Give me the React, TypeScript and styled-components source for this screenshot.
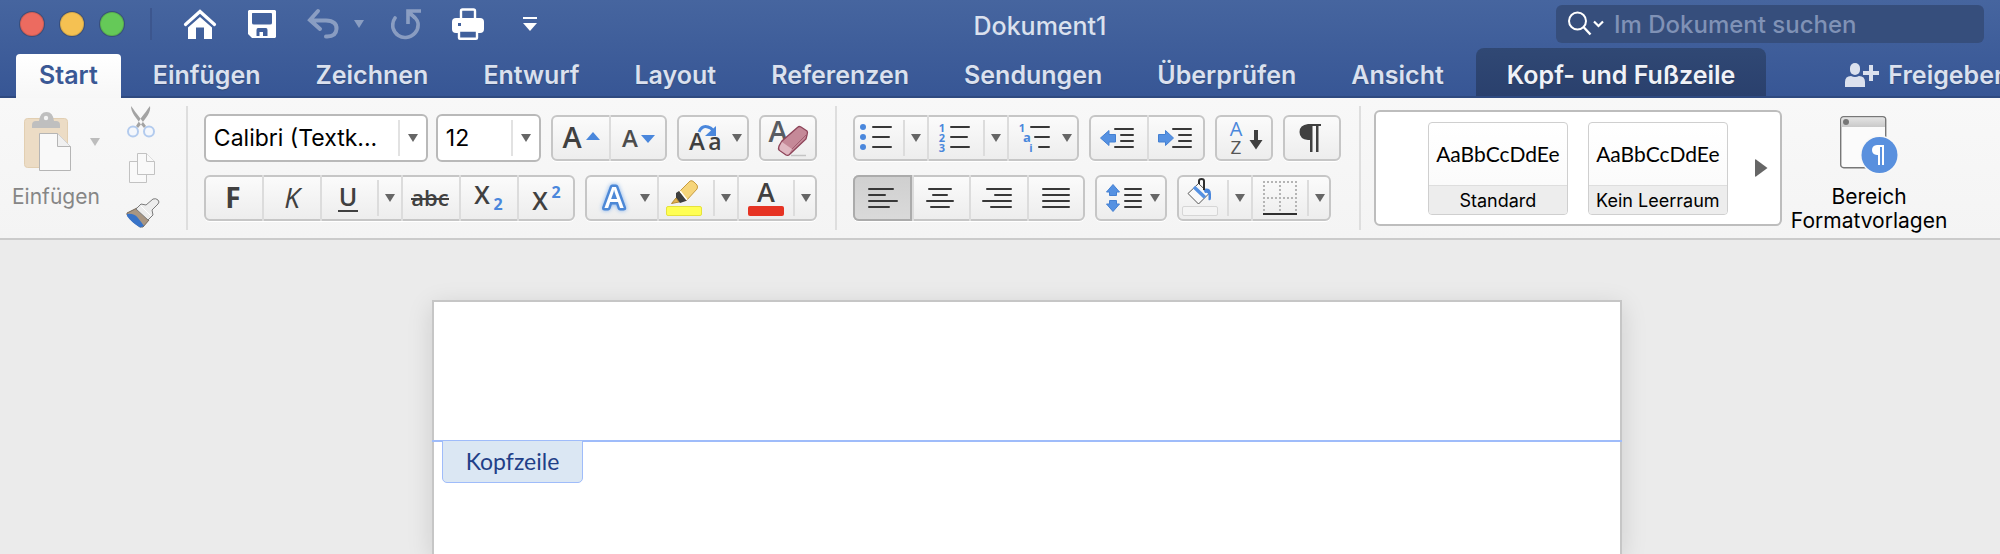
import React from "react";
import styled, { createGlobalStyle, css } from "styled-components";

const BLUE = "#4a87dc";
const INK = "#404040";
const UI = `Inter, "Liberation Sans", sans-serif`;
const GLYPH = `"Open Sans", "Noto Sans", sans-serif`;

const Global = createGlobalStyle`
  * { box-sizing: border-box; }
  body { margin: 0; background: #ebebeb; font-family: ${UI}; overflow: hidden; }
  button { border: 0; padding: 0; background: none; font: inherit; color: inherit; }
  svg { display: block; flex: none; }
`;

const Window = styled.div`
  display: flex;
  flex-direction: column;
  min-height: 100vh;
`;

/* ---------- title bar ---------- */
const Header = styled.header`
  background: linear-gradient(#46659f, #375695);
  color: #dbe1ee;
  overflow: hidden;
`;
const TitleBar = styled.div`
  display: flex;
  align-items: center;
  height: 48px;
  padding: 0 16px 0 20px;
`;
const Lights = styled.div`
  display: flex;
  gap: 16px;
`;
const Light = styled.button<{ $color: string }>`
  width: 24px;
  height: 24px;
  border-radius: 50%;
  background: ${(p) => p.$color};
  box-shadow: 0 0 0 1px #384e7c, inset 0 0 0 1px rgba(0, 0, 0, 0.12);
`;
const BarDivider = styled.div`
  width: 2px;
  height: 32px;
  margin: 0 30px 0 26px;
  background: #3c568e;
`;
const QuickAccess = styled.div`
  display: flex;
  align-items: center;
  gap: 28px;
`;
const QuickButton = styled.button<{ $w: number; $dim?: boolean }>`
  display: flex;
  align-items: center;
  justify-content: ${(p) => (p.$w > 40 ? "space-between" : "center")};
  width: ${(p) => p.$w}px;
  height: 40px;
  color: #fff;
  opacity: ${(p) => (p.$dim ? 0.38 : 1)};
`;
const Title = styled.h1`
  flex: 1;
  margin: 0;
  padding: 3px 20px 0 0;
  text-align: center;
  font-size: 25px;
  font-weight: 500;
  line-height: 32px;
`;
const Search = styled.label`
  display: flex;
  align-items: center;
  gap: 10px;
  flex: 0 1 428px;
  min-width: 0;
  height: 38px;
  padding: 0 12px;
  border-radius: 6px;
  background: #364e7c;
`;
const SearchInput = styled.input`
  flex: 1;
  min-width: 0;
  height: 32px;
  padding: 0;
  border: 0;
  outline: 0;
  background: none;
  color: #fff;
  font: 500 24px ${UI};
  &::placeholder { color: #8092b6; opacity: 1; }
`;

/* ---------- tabs ---------- */
const Tabs = styled.nav`
  display: flex;
  align-items: flex-end;
  gap: 1px;
  height: 50px;
  padding-left: 16px;
  box-shadow: inset 0 -2px #2f4a80;
`;
const Tab = styled.button<{ $kind?: "active" | "context" }>`
  flex: none;
  height: 50px;
  padding: 3px 27px 0;
  font-size: 25px;
  font-weight: 600;
  white-space: nowrap;
  text-shadow: 0 1px 1px rgba(0, 0, 0, 0.2);
  ${(p) =>
    p.$kind === "active" &&
    css`
      height: 44px;
      margin-right: 4px;
      padding: 0 23px 3px;
      border-radius: 4px 4px 0 0;
      background: linear-gradient(#fff, #f7f7f7);
      color: #3a5895;
      text-shadow: none;
    `}
  ${(p) =>
    p.$kind === "context" &&
    css`
      height: 48px;
      margin: 0 0 2px 4px;
      padding: 5px 31px 0;
      border-radius: 8px 8px 0 0;
      background: linear-gradient(#304874, #2a406d);
      color: #f0f2f7;
    `}
`;
const Share = styled(Tab)`
  display: flex;
  align-items: center;
  gap: 9px;
  margin-left: 51px;
`;

/* ---------- ribbon ---------- */
const Ribbon = styled.section`
  display: flex;
  align-items: flex-start;
  height: 142px;
  border-bottom: 2px solid #cbcbcb;
  background: linear-gradient(#f8f8f8, #f4f4f4);
  overflow: hidden;
`;
const Divider = styled.div`
  flex: none;
  width: 2px;
  height: 124px;
  margin: 8px 16px 0 18px;
  background: #dedede;
`;
const Clipboard = styled.div`
  display: flex;
  flex: none;
  padding: 8px 8px 0 12px;
  gap: 26px;
`;
const Paste = styled.button`
  display: flex;
  flex-direction: column;
  align-items: flex-end;
  justify-content: space-between;
  height: 103px;
  padding-top: 6px;
  font-size: 21px;
  line-height: 24px;
  color: #868686;
`;
const PasteTop = styled.span`
  display: flex;
  align-items: center;
  gap: 18px;
`;
const ClipColumn = styled.div`
  display: flex;
  flex-direction: column;
  justify-content: space-between;
  height: 122px;
`;
const IconButton = styled.button`
  display: block;
`;
const Rows = styled.div`
  display: flex;
  flex: none;
  flex-direction: column;
  gap: 12px;
  padding-top: 16px;
`;
const Row = styled.div`
  display: flex;
  align-items: center;
  gap: 10px;
  height: 48px;
`;
const Combos = styled.div`
  display: flex;
  gap: 8px;
`;
const Combo = styled.label<{ $w: number }>`
  display: flex;
  align-items: center;
  width: ${(p) => p.$w}px;
  height: 48px;
  padding-right: 8px;
  border: 2px solid #b9b9b9;
  border-radius: 6px;
  background: #fff;
`;
const ComboSelect = styled.select`
  flex: 1;
  min-width: 0;
  height: 36px;
  margin-right: 8px;
  padding: 0 0 0 8px;
  border: 0;
  border-right: 2px solid #e2e2e2;
  appearance: none;
  background: none;
  color: #000;
  font: 23px ${UI};
`;
const Group = styled.div`
  display: flex;
  align-items: center;
  height: 46px;
  border: 2px solid #c6c6c6;
  border-radius: 6px;
  background: linear-gradient(#fbfbfb, #ededed);
  box-shadow: 0 1px #fff;
`;
const Cell = styled.button<{ $w: number; $on?: boolean }>`
  display: flex;
  align-items: center;
  width: ${(p) => p.$w}px;
  height: 46px;
  box-shadow: inset 2px 0 #dcdcdc;
  &:first-child { margin-left: -2px; box-shadow: none; }
  &:last-child { margin-right: -2px; }
  ${(p) =>
    p.$on &&
    css`
      && {
        border-radius: 6px 0 0 6px;
        background: linear-gradient(#cfcfcf, #dadada);
        box-shadow: inset 0 0 0 2px #ababab;
      }
    `}
`;
const Drop = styled.button`
  display: flex;
  align-items: center;
  justify-content: center;
  width: 24px;
  height: 36px;
  border-left: 2px solid #dcdcdc;
  &:last-child { margin-right: -2px; }
`;

/* ---------- style gallery ---------- */
const Gallery = styled.div`
  display: flex;
  flex: none;
  align-items: center;
  gap: 20px;
  height: 116px;
  margin: 12px 9px 0 -3px;
  padding: 0 12px 0 52px;
  border: 2px solid #bdbdbd;
  border-radius: 6px;
  background: #fff;
`;
const StyleCard = styled.button`
  display: flex;
  flex-direction: column;
  width: 140px;
  height: 93px;
  border: 1px solid #cfcfcf;
  border-radius: 4px;
  background: linear-gradient(#fff, #f9f9f9);
  color: #000;
  overflow: hidden;
`;
const Preview = styled.span`
  width: 100%;
  font: 21px/62px Lato, sans-serif;
`;
const StyleName = styled.span`
  width: 100%;
  border-top: 1px solid #dedede;
  background: #ededed;
  font-size: 18px;
  line-height: 29px;
  white-space: nowrap;
`;
const More = styled.button`
  margin-left: 7px;
`;
const Pane = styled.button`
  display: flex;
  flex: none;
  flex-direction: column;
  align-items: center;
  gap: 11px;
  padding-top: 18px;
  font-size: 21px;
  line-height: 24px;
  color: #000;
`;

/* ---------- document ---------- */
const Workspace = styled.main`
  display: flex;
  flex: 1;
  padding: 60px 378px 0 432px;
`;
const Page = styled.article`
  flex: 1;
  border: 2px solid #c6c6c6;
  border-bottom: 0;
  background: #fff;
  box-shadow: 0 6px 24px rgba(0, 0, 0, 0.13);
`;
const HeaderArea = styled.div`
  height: 140px;
  margin: 0 -2px;
  border-bottom: 2px solid #9fbcfa;
`;
const HeaderTag = styled.div`
  width: 141px;
  height: 43px;
  margin: -2px 0 0 8px;
  border: 1px solid #9fbcfa;
  border-radius: 0 0 5px 5px;
  background: #dbe7f3;
  color: #1f4088;
  text-align: center;
  font: 23px/41px Lato, sans-serif;
`;

/* ---------- icons ---------- */
const Caret = ({ color = "#666" }: { color?: string }) => (
  <svg width="10" height="8" viewBox="0 0 10 8"><path d="M0 0h10L5 8z" fill={color} /></svg>
);

/* A drawing that fills one toolbar cell. */
const CellDrawing = styled.svg`
  overflow: visible;
  fill: ${INK};
  font-family: ${GLYPH};
  text-anchor: middle;
`;
const Art = ({ w, children }: { w: number; children: React.ReactNode }) => (
  <CellDrawing width={w} height="46" viewBox={`0 0 ${w} 46`} aria-hidden="true">{children}</CellDrawing>
);

/* Outlined letter with a soft blue halo. */
const GlowLetter = styled.text`
  font-size: 29px;
  font-weight: 600;
  fill: #fff;
  stroke: #4d88d6;
  stroke-width: 5px;
  stroke-linejoin: round;
  paint-order: stroke;
  filter: drop-shadow(0 0 2px #7fb0ee);
`;

/* Text lines, each given as [x1, x2, y]. */
const Lines = ({ at }: { at: number[][] }) => (
  <path d={at.map(([a, b, y]) => `M${a} ${y}H${b}`).join("")} stroke="#383838" strokeWidth="2" strokeLinecap="round" />
);

const PasteIcon = () => (
  <svg width="48" height="60" viewBox="0 0 48 60">
    <rect x=".5" y="6.500" width="43" height="49" rx="3" fill="#ecdcc5" stroke="#e2cfb2" />
    <path d="M8 13q0-4 4-4h3q1-9 7.500-9T30 9h2q4 0 4 4v3H8z" fill="#bfbfbf" />
    <circle cx="22" cy="6" r="2.200" fill="#f4f4f4" />
    <path d="M15.500 21.500H33.500L46.500 34.500V58.500H15.500z" fill="#f9f9f9" stroke="#b5b5b5" />
    <path d="M33.500 21.500V34.500H46.500" fill="#f0f0f0" stroke="#b5b5b5" />
  </svg>
);
const CutIcon = () => (
  <svg width="32" height="32" viewBox="0 0 32 32">
    <path d="M5 0c0 6 4 11 13 22l2-2L14 12C10 7 8 4 5 0zM24 0c1 6-3 11-12 22l-2-2 5-8C19 7 21 4 24 0z" fill="#a3a3a3" />
    <g fill="#f4f7fc" stroke="#b3cbee" strokeWidth="2"><circle cx="7" cy="25.500" r="5" /><circle cx="23" cy="25.500" r="5" /></g>
  </svg>
);
const CopyIcon = () => (
  <svg width="32" height="32" viewBox="0 0 32 32" fill="#f9f9f9" stroke="#c2c2c2">
    <path d="M3.500 9.500H20.500V30.500H3.500z" />
    <path d="M11.500 1.500H20.500L28.500 9.500V22.500H11.500z" /><path d="M20.500 1.500V9.500H28.500" />
  </svg>
);
const BrushIcon = () => (
  <svg width="34" height="30" viewBox="0 0 34 30">
    <path d="M1 15L11 10 23 22 17 29H14Q6 24 1 17z" fill="#a99682" stroke="#75695c" />
    <path d="M1 16Q8 15 12 20T18 28L14 29.500Q5 24 1 18z" fill="#3873c8" />
    <path d="M10 11L15 6 20 7 27 1Q30 0 32 2T32 6L26 12 27 17 22 22Z" fill="#ededed" stroke="#7b7b7b" strokeLinejoin="round" />
    <path d="M15 8L25 18" stroke="#fff" />
  </svg>
);
const HomeIcon = () => (
  <svg width="34" height="32" viewBox="0 0 34 32" fill="#fff">
    <path d="M2.500 16.500L17 3.500 31.500 16.500" fill="none" stroke="#fff" strokeWidth="3.200" strokeLinecap="round" />
    <path d="M5 19.500L17 9 29 19.500V31H21V19.500H13V31H5z" />
  </svg>
);
const SaveIcon = () => (
  <svg width="28" height="28" viewBox="0 0 28 28">
    <path fill="#fff" fillRule="evenodd" d="M1 0H27L28 1V27L27 28H4L0 24V1zM4.500 3Q4 3 4 4V13Q4 14.500 6 14.500H22Q24 14.500 24 13V4Q24 3 23 3zM10 18Q8.500 18 8.500 20V26H11.500V22H15V26H19.500V20Q19.500 18 18 18z" />
  </svg>
);
const UndoIcon = () => (
  <svg width="34" height="32" viewBox="0 0 34 32" fill="none" stroke="#fff" strokeWidth="4">
    <path d="M12 3L4 12 14 21M5 12.500H20Q31 13 30.500 21T20 28.500" strokeLinecap="round" />
  </svg>
);
const RedoIcon = () => (
  <svg width="30" height="32" viewBox="0 0 30 32" fill="none" stroke="#fff" strokeWidth="3.600">
    <path d="M4 10Q1 14 2 20C4 27 10 30 15 29.500C22 29 28 23 27 15Q26 10 19 6" strokeLinecap="round" />
    <path d="M30 3H17V16M17 3L24 10" />
  </svg>
);
const PrintIcon = () => (
  <svg width="32" height="32" viewBox="0 0 32 32">
    <path d="M9 12V3Q9 1.500 10.500 1.500H21.500Q23 1.500 23 3V12" fill="none" stroke="#fff" strokeWidth="2.400" />
    <path d="M4 10H28Q32 10 32 14V21Q32 25 28 25H4Q0 25 0 21V14Q0 10 4 10z" fill="#fff" />
    <path d="M6 15h3v3H6z" fill="#40609c" />
    <path d="M7 22.500H25V30Q25 30.800 24 30.800H8Q7 30.800 7 30z" fill="#40609c" stroke="#fff" strokeWidth="2.400" />
  </svg>
);
const CustomizeIcon = () => (
  <svg width="14" height="14" viewBox="0 0 14 14" fill="#fff"><path d="M0 0H14V2H0zM0 6H14L7 14z" /></svg>
);
const SearchIcon = () => (
  <svg width="36" height="26" viewBox="0 0 36 26" fill="none" stroke="#fff" strokeWidth="2">
    <circle cx="9.500" cy="10" r="8.500" /><path d="M15.500 16L22.500 23.500" strokeWidth="2.400" />
    <path d="M26 10.500L30.500 15 35 10.500" strokeWidth="2.200" />
  </svg>
);
const ShareIcon = () => (
  <svg width="34" height="26" viewBox="0 0 34 26" fill="#dbe1ee">
    <rect x="5" y="1" width="10" height="12" rx="5" />
    <path d="M0 25V20Q0 14 6 14Q10 16 14 14Q20 14 20 20V25zM24 3H28V9H34V13H28V19H24V13H18V9H24z" />
  </svg>
);
const PaneIcon = () => (
  <svg width="58" height="58" viewBox="0 0 58 58">
    <defs>
      <linearGradient id="paneBar" x2="0" y2="1"><stop stopColor="#e4e4e4" /><stop offset="1" stopColor="#c9c9c9" /></linearGradient>
    </defs>
    <rect x=".7" y=".7" width="45" height="51" rx="3" fill="#fbfbfb" stroke="#777" strokeWidth="1.400" />
    <path d="M1.400 11V3Q1.400 1.400 3 1.400H43Q45 1.400 45 3V11z" fill="url(#paneBar)" />
    <circle cx="6" cy="6" r="3" fill="#777" />
    <circle cx="39.500" cy="39" r="19.500" fill="#f8f8f8" />
    <circle cx="39.500" cy="39" r="18" fill="#5990de" />
    <path d="M44 29H37Q32 29.500 32 34T37 39H38V49H40V31H42V49H44z" fill="#fff" />
  </svg>
);

const Blue = ({ d }: { d: string }) => <path d={d} fill="#5591e2" stroke="#4480d2" strokeLinejoin="round" />;

const tabs = ["Einfügen", "Zeichnen", "Entwurf", "Layout", "Referenzen", "Sendungen", "Überprüfen", "Ansicht"];
const styleNames = ["Standard", "Kein Leerraum"];

export default function App() {
  return (
    <Window>
      <Global />
      <Header>
        <TitleBar>
          <Lights>
            <Light $color="#ec6b60" aria-label="Schließen" />
            <Light $color="#f5c152" aria-label="Minimieren" />
            <Light $color="#65c958" aria-label="Zoomen" />
          </Lights>
          <BarDivider />
          <QuickAccess>
            <QuickButton $w={36} aria-label="Startseite"><HomeIcon /></QuickButton>
            <QuickButton $w={32} aria-label="Speichern"><SaveIcon /></QuickButton>
            <QuickButton $w={58} $dim aria-label="Rückgängig"><UndoIcon /><Caret color="#fff" /></QuickButton>
            <QuickButton $w={28} $dim aria-label="Wiederholen"><RedoIcon /></QuickButton>
            <QuickButton $w={40} aria-label="Drucken"><PrintIcon /></QuickButton>
            <QuickButton $w={28} aria-label="Anpassen"><CustomizeIcon /></QuickButton>
          </QuickAccess>
          <Title>Dokument1</Title>
          <Search>
            <SearchIcon />
            <SearchInput type="search" placeholder="Im Dokument suchen" aria-label="Im Dokument suchen" />
          </Search>
        </TitleBar>
        <Tabs>
          <Tab $kind="active">Start</Tab>
          {tabs.map((t) => <Tab key={t}>{t}</Tab>)}
          <Tab $kind="context">Kopf- und Fußzeile</Tab>
          <Share><ShareIcon />Freigeben</Share>
        </Tabs>
      </Header>

      <Ribbon>
        <Clipboard>
          <Paste>
            <PasteTop><PasteIcon /><Caret color="#bdbdbd" /></PasteTop>
            Einfügen
          </Paste>
          <ClipColumn>
            <IconButton aria-label="Ausschneiden"><CutIcon /></IconButton>
            <IconButton aria-label="Kopieren"><CopyIcon /></IconButton>
            <IconButton aria-label="Format übertragen"><BrushIcon /></IconButton>
          </ClipColumn>
        </Clipboard>
        <Divider />

        <Rows>
          <Row>
            <Combos>
              <Combo $w={224}>
                <ComboSelect aria-label="Schriftart"><option>Calibri (Textk...</option></ComboSelect>
                <Caret />
              </Combo>
              <Combo $w={105}>
                <ComboSelect aria-label="Schriftgrad"><option>12</option></ComboSelect>
                <Caret />
              </Combo>
            </Combos>
            <Group>
              <Cell $w={58} aria-label="Schrift vergrößern">
                <Art w={58}><text x="21" y="33" fontSize="29" fontWeight="600">A</text><path d="M35 25L42 17 49 25z" fill={BLUE} /></Art>
              </Cell>
              <Cell $w={58} aria-label="Schrift verkleinern">
                <Art w={58}><text x="21" y="32" fontSize="24" fontWeight="600" fill="#4c4c4c">A</text><path d="M32 20H46L39 28z" fill={BLUE} /></Art>
              </Cell>
            </Group>
            <Group>
              <Cell $w={72} aria-label="Groß-/Kleinschreibung">
                <Art w={55}>
                  <text x="20" y="35" fontSize="24" fontWeight="600">A</text><text x="38" y="35" fontSize="23" fontWeight="600">a</text>
                  <path d="M22 17Q25 10 31 12T35 17" fill="none" stroke={BLUE} strokeWidth="3" /><path d="M39 11V21H28z" fill={BLUE} />
                </Art>
                <Caret />
              </Cell>
            </Group>
            <Group>
              <Cell $w={58} aria-label="Formatierung löschen">
                <Art w={58}>
                  <text x="19" y="27" fontSize="29" fontWeight="600" fill="#585c62">A</text>
                  <path d="M32 40.500H47" stroke="#c4c4c4" strokeWidth="1.500" />
                  <path d="M39 12Q40 11 42 12L48 16Q49 17 48 20L47 24 31 39Q29 41 27 40L20 35Q19 34 20 31L23 26z" fill="#c58998" stroke="#8d4459" strokeWidth="1.300" />
                  <path d="M23 27L33 34 30 39Q29 40 27 39L21 35Q20 33 21 31z" fill="#e0b8c2" />
                  <path d="M33 34L47 20" stroke="#a25f71" />
                </Art>
              </Cell>
            </Group>
          </Row>
          <Row>
            <Group>
              <Cell $w={58} aria-label="Fett"><Art w={58}><text x="29" y="33" fontSize="28" fontWeight="700">F</text></Art></Cell>
              <Cell $w={58} aria-label="Kursiv"><Art w={58}><text x="30" y="33" fontSize="28" fontStyle="italic" fontWeight="500">K</text></Art></Cell>
              <Cell $w={57} aria-label="Unterstrichen">
                <Art w={57}><text x="28" y="31" fontSize="25" fontWeight="600">U</text><path d="M18 35H38V37H18z" /></Art>
              </Cell>
              <Drop aria-label="Unterstreichung wählen"><Caret /></Drop>
              <Cell $w={58} aria-label="Durchgestrichen">
                <Art w={58}><text x="29" y="31" fontSize="22" fontWeight="600">abc</text><path d="M10 23H48V25H10z" /></Art>
              </Cell>
              <Cell $w={58} aria-label="Tiefgestellt">
                <Art w={58}><text x="23" y="29" fontSize="25" fontWeight="600">X</text><text x="39" y="35" fontSize="16" fontWeight="700" fill={BLUE}>2</text></Art>
              </Cell>
              <Cell $w={58} aria-label="Hochgestellt">
                <Art w={58}><text x="23" y="35" fontSize="25" fontWeight="600">X</text><text x="39" y="23" fontSize="16" fontWeight="700" fill={BLUE}>2</text></Art>
              </Cell>
            </Group>
            <Group>
              <Cell $w={72} aria-label="Texteffekte">
                <Art w={55}><GlowLetter x="29" y="33">A</GlowLetter></Art>
                <Caret />
              </Cell>
              <Cell $w={56} aria-label="Texthervorhebungsfarbe">
                <Art w={56}>
                  <rect x="9.500" y="31.500" width="35" height="9" rx="1.500" fill="#ffff54" stroke="#e6e23c" />
                  <path d="M22 17L33 6Q35 5 37 7L40 10Q41 12 40 14L29 26z" fill="#f6d57a" stroke="#c69b41" />
                  <path d="M22 16L19 18V24L23 28 29 26 30 25z" fill="#3f3f3f" />
                  <path d="M23 16L30 25" stroke="#fff" strokeWidth="1.500" />
                  <path d="M19 23L14.500 28.500 22 27z" fill="#e2b352" stroke="#b58a35" />
                </Art>
              </Cell>
              <Drop aria-label="Hervorhebungsfarbe wählen"><Caret /></Drop>
              <Cell $w={56} aria-label="Schriftfarbe">
                <Art w={56}><text x="29" y="27" fontSize="27" fontWeight="600">A</text><rect x="11" y="31" width="36" height="10" rx="2" fill="#e63323" /></Art>
              </Cell>
              <Drop aria-label="Schriftfarbe wählen"><Caret /></Drop>
            </Group>
          </Row>
        </Rows>
        <Divider />

        <Rows>
          <Row>
            <Group>
              <Cell $w={50} aria-label="Aufzählungszeichen">
                <Art w={50}>
                  <g fill={BLUE}><circle cx="10" cy="12" r="3" /><circle cx="10" cy="22" r="3" /><circle cx="10" cy="32" r="3" /></g>
                  <Lines at={[[20, 38, 12], [20, 36, 22], [20, 38, 32]]} />
                </Art>
              </Cell>
              <Drop aria-label="Aufzählungszeichen wählen"><Caret /></Drop>
              <Cell $w={56} aria-label="Nummerierung">
                <Art w={56}>
                  <g fill={BLUE} fontSize="11" fontWeight="700"><text x="15" y="17">1</text><text x="15" y="27">2</text><text x="15" y="37">3</text></g>
                  <Lines at={[[24, 42, 12], [24, 40, 22], [24, 42, 32]]} />
                </Art>
              </Cell>
              <Drop aria-label="Nummerierung wählen"><Caret /></Drop>
              <Cell $w={72} aria-label="Liste mit mehreren Ebenen">
                <Art w={55}>
                  <g fill={BLUE} fontSize="11" fontWeight="700"><text x="15" y="17">1</text><text x="20" y="27" fontSize="13">a</text><text x="24" y="37">i</text></g>
                  <Lines at={[[24, 42, 12], [28, 42, 22], [32, 42, 32]]} />
                </Art>
                <Caret />
              </Cell>
            </Group>
            <Group>
              <Cell $w={58} aria-label="Einzug verkleinern">
                <Art w={58}><Lines at={[[26, 44, 14], [32, 44, 20], [32, 44, 26], [26, 44, 32]]} /><Blue d="M11.500 23L20 15.500V19.500H26.500V27H20V30.500z" /></Art>
              </Cell>
              <Cell $w={58} aria-label="Einzug vergrößern">
                <Art w={58}><Lines at={[[26, 44, 14], [32, 44, 20], [32, 44, 26], [26, 44, 32]]} /><Blue d="M26.500 23L18.500 15.500V19.500H11.500V27H18.500V30.500z" /></Art>
              </Cell>
            </Group>
            <Group>
              <Cell $w={58} aria-label="Sortieren">
                <Art w={58}>
                  <text x="21" y="21" fontSize="20" fontWeight="500" fill={BLUE}>A</text><text x="21" y="39" fontSize="19" fontWeight="500" fill="#555">Z</text>
                  <path d="M39 15H43V25H47.500L41 34.500 34.500 25H39z" />
                </Art>
              </Cell>
            </Group>
            <Group>
              <Cell $w={58} aria-label="Formatierungszeichen">
                <Art w={58}><path d="M38 9H25Q16.500 10 16.500 17T25 25H27V37H29.500V11H33V37H35.500V11H38z" /></Art>
              </Cell>
            </Group>
          </Row>
          <Row>
            <Group>
              <Cell $w={59} $on aria-label="Linksbündig"><Art w={59}><Lines at={[[16, 40, 14], [16, 32, 20], [16, 44, 26], [16, 36, 32]]} /></Art></Cell>
              <Cell $w={57} aria-label="Zentriert"><Art w={57}><Lines at={[[17, 39, 14], [21, 35, 20], [15, 41, 26], [19, 37, 32]]} /></Art></Cell>
              <Cell $w={58} aria-label="Rechtsbündig"><Art w={58}><Lines at={[[18, 42, 14], [26, 42, 20], [14, 42, 26], [22, 42, 32]]} /></Art></Cell>
              <Cell $w={58} aria-label="Blocksatz"><Art w={58}><Lines at={[[16, 42, 14], [16, 42, 20], [16, 42, 26], [16, 42, 32]]} /></Art></Cell>
            </Group>
            <Group>
              <Cell $w={72} aria-label="Zeilenabstand">
                <Art w={55}>
                  <Blue d="M18 9.500L24.500 17H21.500V20.500H14.500V17H11.500zM18 36.500L24.500 29H21.500V25.500H14.500V29H11.500z" />
                  <Lines at={[[30, 46, 14], [30, 46, 20], [30, 46, 26], [30, 46, 32]]} />
                </Art>
                <Caret />
              </Cell>
            </Group>
            <Group>
              <Cell $w={50} aria-label="Schattierung">
                <Art w={50}>
                  <rect x="5.500" y="31.500" width="35" height="9" rx="1.500" fill="#f4f4f4" stroke="#d6d6d6" />
                  <path d="M21.500 8.500L32 18.500 21.500 29 11 18.500z" fill="#fafafa" stroke="#555" strokeLinejoin="round" />
                  <path d="M17 12L28 22.500" stroke="#5591e2" strokeWidth="3.500" />
                  <path d="M26 14Q34 12 34 19V23Q34 26 31.500 25V20Q31 17 28 18z" fill={BLUE} />
                  <path d="M22 9V6Q22 4 24.500 4T27 6V15" fill="none" stroke="#2f2f2f" strokeWidth="2" />
                </Art>
              </Cell>
              <Drop aria-label="Schattierung wählen"><Caret /></Drop>
              <Cell $w={56} aria-label="Rahmen">
                <Art w={56}>
                  <path d="M12 7H46M12 23H46M13 6V37M29 6V37M45 6V37" stroke="#b5b5b5" strokeWidth="2" strokeDasharray="2 2" />
                  <path d="M12 38H46V40H12z" fill="#2f2f2f" />
                </Art>
              </Cell>
              <Drop aria-label="Rahmen wählen"><Caret /></Drop>
            </Group>
          </Row>
        </Rows>
        <Divider />

        <Gallery>
          {styleNames.map((name) => (
            <StyleCard key={name}>
              <Preview>AaBbCcDdEe</Preview>
              <StyleName>{name}</StyleName>
            </StyleCard>
          ))}
          <More aria-label="Weitere Formatvorlagen">
            <svg width="13" height="18" viewBox="0 0 13 18"><path d="M0 1Q0 0 1 .5L12.500 9 1 17.500Q0 18 0 17z" fill="#666" /></svg>
          </More>
        </Gallery>
        <Pane>
          <PaneIcon />
          <span>Bereich<br />Formatvorlagen</span>
        </Pane>
      </Ribbon>

      <Workspace>
        <Page>
          <HeaderArea />
          <HeaderTag>Kopfzeile</HeaderTag>
        </Page>
      </Workspace>
    </Window>
  );
}
